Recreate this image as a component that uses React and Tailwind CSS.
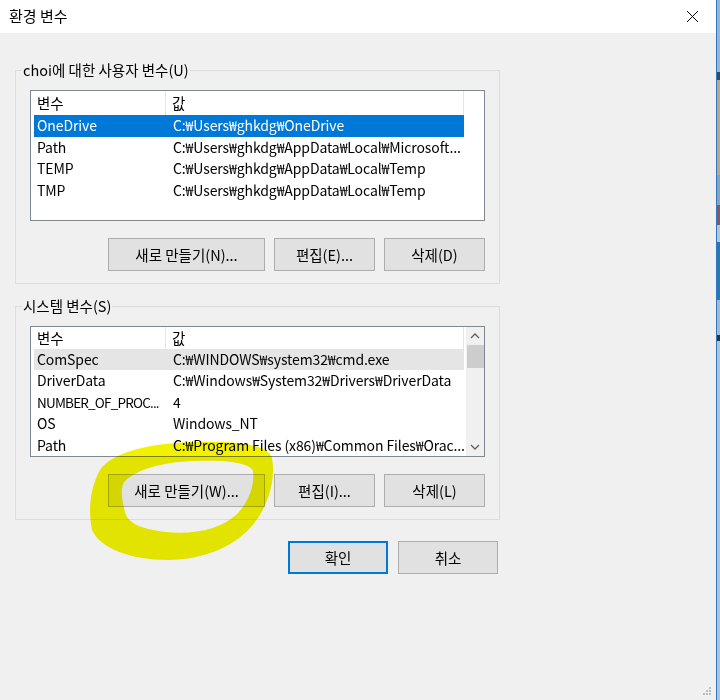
import React from "react";

const userVars = [
  { name: "OneDrive", value: "C:₩Users₩ghkdg₩OneDrive" },
  { name: "Path", value: "C:₩Users₩ghkdg₩AppData₩Local₩Microsoft..." },
  { name: "TEMP", value: "C:₩Users₩ghkdg₩AppData₩Local₩Temp" },
  { name: "TMP", value: "C:₩Users₩ghkdg₩AppData₩Local₩Temp" },
];

const systemVars = [
  { name: "ComSpec", value: "C:₩WINDOWS₩system32₩cmd.exe" },
  { name: "DriverData", value: "C:₩Windows₩System32₩Drivers₩DriverData" },
  { name: "NUMBER_OF_PROC...", value: "4", tight: true },
  { name: "OS", value: "Windows_NT" },
  { name: "Path", value: "C:₩Program Files (x86)₩Common Files₩Orac..." },
];

const font = { fontFamily: '"Noto Sans CJK KR", "Noto Sans", sans-serif' };

const WinButton = ({ children, width = "w-[101px]", primary = false }) => (
  <button
    className={
      "h-[33px] bg-[#e1e1e1] text-[14.5px] text-black flex items-center justify-center " +
      width +
      (primary ? " border-2 border-[#0078d7]" : " border border-[#adadad]")
    }
  >
    {children}
  </button>
);

const Row = ({ item, state }) => {
  let cls = "flex h-[21.5px] items-center text-[14px] leading-[21.5px] tracking-[-0.1px]";
  if (state === "selected") cls += " bg-[#0078d7] text-white";
  else if (state === "hover") cls += " bg-[#e5e5e5] text-black";
  else cls += " text-black";
  return (
    <div className={cls}>
      <div
        className={
          "w-[132px] shrink-0 pl-[3px] whitespace-nowrap overflow-hidden" +
          (item.tight ? " tracking-[-0.8px] text-[13.5px]" : "")
        }
      >
        {item.name}
      </div>
      <div className="flex-1 min-w-0 pl-[7px] whitespace-nowrap overflow-hidden">{item.value}</div>
    </div>
  );
};

const VarList = ({ items, selected, hover, scroll }) => (
  <div className="h-[131px] border border-[#828790] bg-white flex overflow-hidden">
    <div className="w-[433px] shrink-0 pl-[3px] flex flex-col">
      <div className="flex h-[24px] items-center text-[14.5px] text-black">
        <div className="w-[132px] shrink-0 pl-[3px] h-full flex items-center border-r border-[#e5e5e5]">
          변수
        </div>
        <div className="flex-1 pl-[6px] h-full flex items-center border-r border-[#e5e5e5]">값</div>
      </div>
      {items.map((it, i) => (
        <Row
          key={it.name}
          item={it}
          state={i === selected ? "selected" : i === hover ? "hover" : ""}
        />
      ))}
    </div>
    {scroll ? (
      <div className="ml-auto w-[18px] bg-[#f0f0f0] flex flex-col items-center">
        <svg width="18" height="18" viewBox="0 0 18 18" className="shrink-0">
          <path d="M5 11 L9 7 L13 11" fill="none" stroke="#606060" strokeWidth="1.3" />
        </svg>
        <div className="w-[17px] h-[23px] bg-[#cdcdcd]" />
        <div className="flex-1" />
        <svg width="18" height="18" viewBox="0 0 18 18" className="shrink-0">
          <path d="M5 7 L9 11 L13 7" fill="none" stroke="#606060" strokeWidth="1.3" />
        </svg>
      </div>
    ) : null}
  </div>
);

const Group = ({ title, children }) => (
  <fieldset className="w-[485px] border border-[#dcdcdc] px-[14px] pt-[10px] pb-[12px]">
    <legend className="ml-[-8px] px-[1px] text-[14.5px] leading-[20px] text-black">{title}</legend>
    {children}
  </fieldset>
);

// freehand yellow marker loop drawn over the screenshot
const Highlight = () => (
  <svg
    className="absolute left-0 top-0 pointer-events-none mix-blend-multiply"
    width="720"
    height="700"
    viewBox="0 0 720 700"
  >
    <path
      fillRule="evenodd"
      fill="#f2f200"
      d="M100 470 C112 452 150 443 195 442 C235 441 268 444 272 458 C276 480 268 505 255 522 C238 545 205 560 168 560 C130 560 100 548 92 530 C88 510 90 488 100 470 Z M124 482 C136 470 160 462 195 461 C228 460 250 463 253 471 C255 488 247 504 236 515 C220 529 195 535 166 532 C142 529 128 524 125 512 C122 500 120 490 124 482 Z"
    />
  </svg>
);

export default function App() {
  return (
    <div className="relative w-[720px] h-[700px] flex bg-[#f0f0f0] overflow-hidden" style={font}>
      <div className="w-[717px] h-full flex flex-col bg-[#f0f0f0] border-r border-[#2b78c4]">
        <div className="h-[33px] bg-white flex items-center justify-between shrink-0">
          <span className="pl-[9px] text-[15px] text-black">환경 변수</span>
          <svg width="46" height="33" viewBox="0 0 46 33">
            <path d="M17 11 L28 22 M28 11 L17 22" stroke="#000" strokeWidth="1" />
          </svg>
        </div>
        <div className="flex-1 pl-[15px] pt-[27px] flex flex-col">
          <Group title="choi에 대한 사용자 변수(U)">
            <VarList items={userVars} selected={0} />
            <div className="mt-[17px] flex justify-end gap-[9px]">
              <WinButton width="w-[157px]">새로 만들기(N)...</WinButton>
              <WinButton>편집(E)...</WinButton>
              <WinButton>삭제(D)</WinButton>
            </div>
          </Group>
          <div className="h-[12px]" />
          <Group title="시스템 변수(S)">
            <VarList items={systemVars} hover={0} scroll />
            <div className="mt-[17px] flex justify-end gap-[9px]">
              <WinButton width="w-[157px]">새로 만들기(W)...</WinButton>
              <WinButton>편집(I)...</WinButton>
              <WinButton>삭제(L)</WinButton>
            </div>
          </Group>
          <div className="w-[485px] mt-[21px] flex justify-end gap-[10px] pr-[2px]">
            <WinButton width="w-[100px]" primary>
              확인
            </WinButton>
            <WinButton width="w-[100px]">취소</WinButton>
          </div>
        </div>
        <div className="flex justify-end pr-[4px] pb-[2px]">
          <svg width="12" height="12" viewBox="0 0 12 12">
            <rect x="9" y="1" width="2" height="2" fill="#bcbcbc" />
            <rect x="6" y="4" width="2" height="2" fill="#bcbcbc" />
            <rect x="9" y="4" width="2" height="2" fill="#bcbcbc" />
            <rect x="3" y="7" width="2" height="2" fill="#bcbcbc" />
            <rect x="6" y="7" width="2" height="2" fill="#bcbcbc" />
            <rect x="9" y="7" width="2" height="2" fill="#bcbcbc" />
          </svg>
        </div>
      </div>
      <div className="w-[3px] h-full flex flex-col">
        <div className="h-[72px] bg-[#9fb4c8]" />
        <div className="h-[8px] bg-[#3a4a5a]" />
        <div className="h-[95px] bg-[#c4a67a]" />
        <div className="h-[30px] bg-[#8ea2b6]" />
        <div className="h-[20px] bg-[#9a5058]" />
        <div className="h-[17px] bg-[#b9c6d2]" />
        <div className="h-[58px] bg-[#2a78ae]" />
        <div className="h-[35px] bg-[#a9b8c6]" />
        <div className="h-[6px] bg-[#30353c]" />
        <div className="flex-1 bg-[#b6c4d1]" />
      </div>
      <Highlight />
    </div>
  );
}
